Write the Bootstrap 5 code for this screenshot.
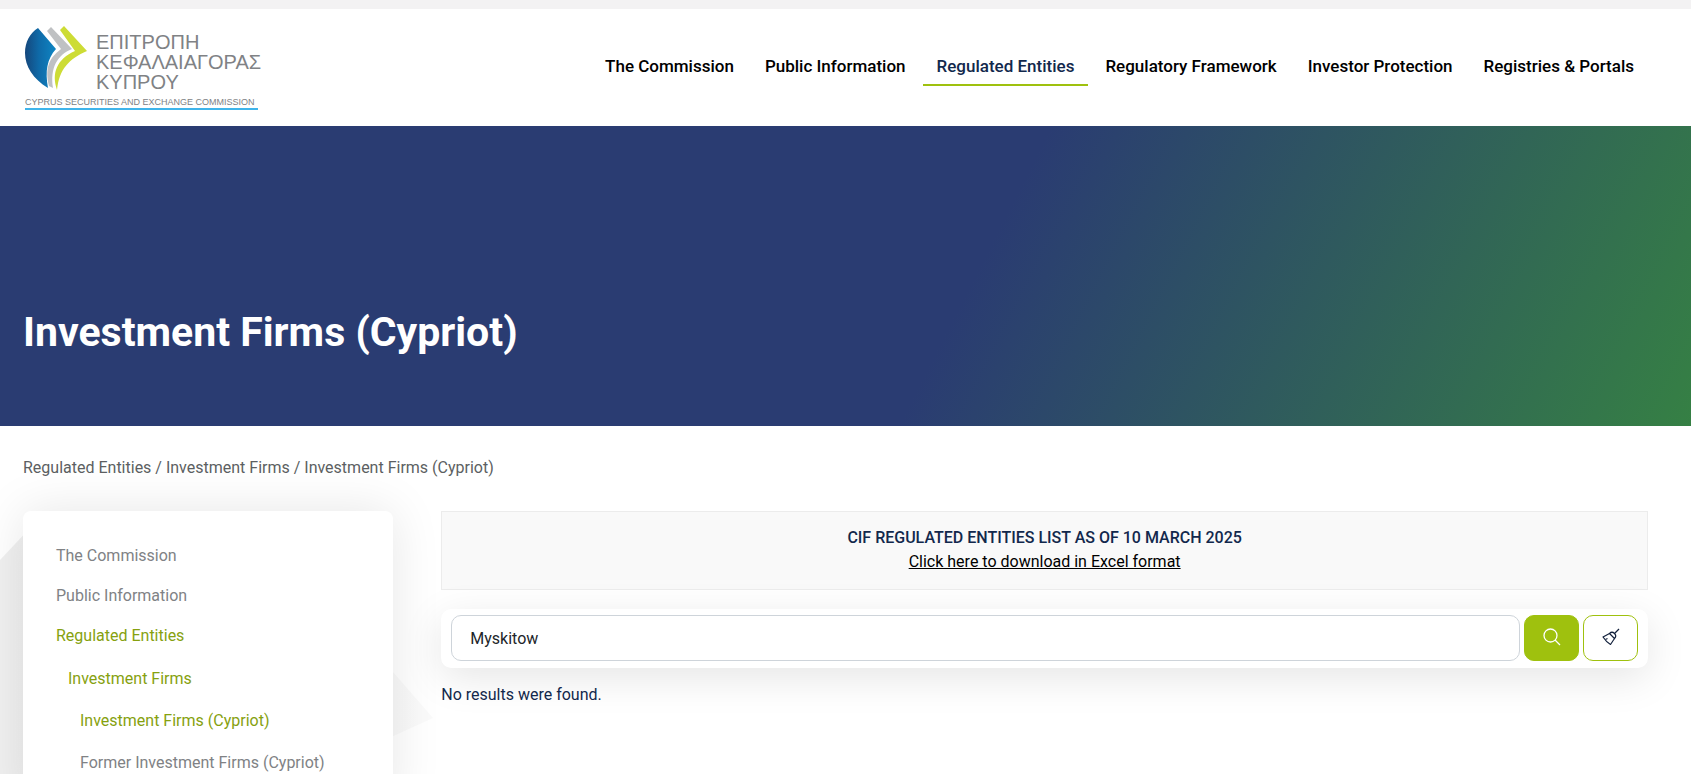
<!DOCTYPE html>
<html lang="en">
<head>
<meta charset="utf-8">
<meta name="viewport" content="width=device-width, initial-scale=1">
<title>Investment Firms (Cypriot)</title>
<link rel="stylesheet" href="https://cdn.jsdelivr.net/npm/bootstrap@5.3.0/dist/css/bootstrap.min.css">
<style>
  :root { --lime: #9fc10e; --lime-text: #86a10f; --navy: #12284c; }
  body { font-family: Roboto, "Liberation Sans", sans-serif; font-size: 16px; line-height: 24px; color: var(--navy); overflow-x: hidden; }
  .top-strip { height: 9px; background: #f3f2f3; }
  .page-gutter { padding-left: 23px; padding-right: 43px; }
  .site-header { min-height: 117px; }
  .logo-svg { display: block; width: 244px; height: 86px; }
  .main-menu { column-gap: 3px; }
  .main-menu .nav-link { padding: 4px 14px; font-size: 17px; font-weight: 500; line-height: 27px; color: #000; border-bottom: 2px solid transparent; white-space: nowrap; }
  .main-menu .nav-link.active { color: var(--navy); border-bottom-color: var(--lime); }
  .hero { min-height: 300px; padding-bottom: 68px; background: linear-gradient(117deg, #2a3c72 57%, #368342 102%); }
  .hero h1 { font-size: 41px; font-weight: 700; line-height: 52px; color: #fff; }
  .crumbs { padding-top: 30px; margin-bottom: 31px; color: #5c5f62; }
  .crumbs a { color: inherit; text-decoration: none; }
  .side-col { z-index: 0; }
  .side-shape { left: 0; top: 0; width: 434px; height: 268px; z-index: -1; }
  .side-card { border-radius: 8px; padding: 25px 33px; box-shadow: 0 0 50px rgba(0,0,0,.1); }
  .side-card .nav-link { padding: 8px 0; line-height: 24px; color: #808285; }
  .side-card .nav-link.active { color: var(--lime-text); }
  .sub-menu { padding: 3px 0 0 12px; row-gap: 2px; }
  .sub-menu .sub-menu { padding-top: 0; }
  .notice { padding: 14px 16px 15px; background: #f9f9f9; border: 1px solid #ececec; }
  .notice a { color: #000; }
  .search-card { margin-top: 19px; padding: 6px 10px 7px; border-radius: 10px; box-shadow: 0 10px 40px rgba(0,0,0,.1); column-gap: 4px; }
  .search-card .form-control { height: 46px; padding: 0 18px; border-radius: 10px; border-color: #ced4da; color: #212529; }
  .search-card .btn { width: 55px; height: 46px; padding: 0 0 3px; flex: none; border: 1px solid var(--lime); border-radius: 10px; }
  .search-card .btn-find { background: var(--lime); }
  .search-card .btn-clean { background: #fff; }
  .result-note { margin: 15px 0 0; }
</style>
</head>
<body>
<div class="top-strip"></div>
<header class="site-header page-gutter d-flex justify-content-between align-items-center">
  <a href="#" aria-label="Cyprus Securities and Exchange Commission">
    <svg class="logo-svg" viewBox="0 0 244 86" role="img">
      <defs>
        <linearGradient id="leaf" x1="0" y1="0" x2="1" y2="0">
          <stop offset="0" stop-color="#15477c"/><stop offset=".45" stop-color="#0f6aa8"/><stop offset="1" stop-color="#0f86c4"/>
        </linearGradient>
      </defs>
      <path fill="url(#leaf)" d="M15 3 L33 24 C24 34 22 46 25 63 C10 54 2 41 2 28 C2 17 7 8 15 3Z"/>
      <path fill="#bfc1c3" d="M24 6 L28 2 L49 24 C34 30 27 43 30 63 L26 61 C22 44 25 34 38 24Z"/>
      <path fill="#cddc35" d="M37 5 L41 1 L64 26 C46 34 36 44 34 65 C28 48 34 34 52 26Z"/>
      <g fill="#808285" font-family="Liberation Sans, sans-serif">
        <text x="73" y="24" font-size="20">ΕΠΙΤΡΟΠΗ</text>
        <text x="73" y="44" font-size="20">ΚΕΦΑΛΑΙΑΓΟΡΑΣ</text>
        <text x="73" y="64" font-size="20">ΚΥΠΡΟΥ</text>
        <text x="2" y="80" font-size="9">CYPRUS SECURITIES AND EXCHANGE COMMISSION</text>
      </g>
      <rect x="2" y="83" width="233" height="2" fill="#3fb4ea"/>
    </svg>
  </a>
  <nav class="nav main-menu flex-nowrap" aria-label="Main">
    <a class="nav-link" href="#">The Commission</a>
    <a class="nav-link" href="#">Public Information</a>
    <a class="nav-link active" href="#">Regulated Entities</a>
    <a class="nav-link" href="#">Regulatory Framework</a>
    <a class="nav-link" href="#">Investor Protection</a>
    <a class="nav-link" href="#">Registries &amp; Portals</a>
  </nav>
</header>

<section class="hero page-gutter d-flex align-items-end">
  <h1 class="mb-0">Investment Firms (Cypriot)</h1>
</section>

<main class="page-gutter">
  <nav class="crumbs" aria-label="Breadcrumb">
    <a href="#">Regulated Entities</a> / <a href="#">Investment Firms</a> / <span>Investment Firms (Cypriot)</span>
  </nav>
  <div class="row gx-5">
    <aside class="col-3 position-relative side-col">
      <svg class="side-shape position-absolute" viewBox="0 0 434 268" aria-hidden="true">
        <defs>
          <linearGradient id="shade" x1="0" y1="0" x2="1" y2="0">
            <stop offset="0" stop-color="#000" stop-opacity=".06"/><stop offset="1" stop-color="#000" stop-opacity=".02"/>
          </linearGradient>
        </defs>
        <path fill="url(#shade)" d="M0 50 L46 1 L255 1 L434 207 L300 268 L0 268Z"/>
      </svg>
      <nav class="side-card bg-white nav flex-column" aria-label="Section">
        <a class="nav-link" href="#">The Commission</a>
        <a class="nav-link" href="#">Public Information</a>
        <a class="nav-link active" href="#">Regulated Entities</a>
        <div class="sub-menu nav flex-column">
          <a class="nav-link active" href="#">Investment Firms</a>
          <div class="sub-menu nav flex-column">
            <a class="nav-link active" href="#">Investment Firms (Cypriot)</a>
            <a class="nav-link" href="#">Former Investment Firms (Cypriot)</a>
          </div>
        </div>
      </nav>
    </aside>
    <div class="col-9">
      <div class="notice text-center">
        <div class="fw-medium">CIF REGULATED ENTITIES LIST AS OF 10 MARCH 2025</div>
        <a href="#">Click here to download in Excel format</a>
      </div>
      <form class="search-card bg-white d-flex align-items-center">
        <input class="form-control" type="text" value="Myskitow" aria-label="Search">
        <button class="btn btn-find" type="button" aria-label="Search">
          <svg width="18" height="18" viewBox="0 0 18 18" fill="none" stroke="#fff" stroke-width="1.3"><circle cx="7.500" cy="7.500" r="6.500"/><path d="M12 12 L17 17"/></svg>
        </button>
        <button class="btn btn-clean" type="button" aria-label="Clear">
          <svg width="18" height="18" viewBox="0 0 18 18" fill="none" stroke="#12203c" stroke-width="1.2" stroke-linejoin="round"><path d="M17 1 L12.500 5.500"/><path d="M7.500 5.500 C9 4 11 4 12.500 5.500 C14 7 14 9 12.500 10.500 Z"/><path d="M7.500 5.500 L1 9 C3 12 5 14.500 8.500 16.500 L12.500 10.500"/><path d="M3.500 11.500 L5.500 10.500"/></svg>
        </button>
      </form>
      <p class="result-note">No results were found.</p>
    </div>
  </div>
</main>
<script src="https://cdn.jsdelivr.net/npm/bootstrap@5.3.0/dist/js/bootstrap.bundle.min.js"></script>
</body>
</html>
